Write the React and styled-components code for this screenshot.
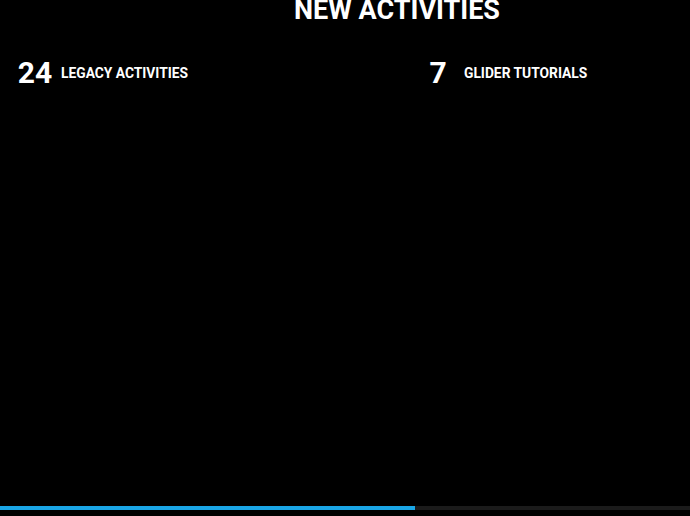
import React from "react";
import styled, { createGlobalStyle } from "styled-components";

const Global = createGlobalStyle`
  html, body { margin: 0; padding: 0; background: #000; }
  body { font-family: Roboto, "Liberation Sans", sans-serif; color: #fff; overflow: hidden; }
`;

const Page = styled.div`
  height: 516px;
  display: flex;
  flex-direction: column;
  background: #000;
`;

const Title = styled.h1`
  margin: -3px 0 0 0;
  padding-left: 104px;
  font-size: 27px;
  line-height: 27px;
  font-weight: 700;
  text-align: center;
  letter-spacing: 0;
`;

const Stats = styled.div`
  display: grid;
  grid-template-columns: 403px 1fr;
  padding: 31px 0 0 17px;
`;

const Stat = styled.div`
  display: flex;
  align-items: center;
  gap: 8px;
`;

const Num = styled.span`
  width: 36px;
  text-align: center;
  font-size: 30px;
  font-weight: 700;
  line-height: 36px;
`;

const Label = styled.span`
  font-size: 13.8px;
  font-weight: 700;
  text-transform: uppercase;
`;

const Spacer = styled.div`
  flex: 1;
`;

const Track = styled.div`
  height: 4px;
  margin-bottom: 6px;
  background: #1b1b1b;
`;

const Fill = styled.div`
  height: 100%;
  background: #1aa6e6;
`;

const stats = [
  { n: 24, label: "Legacy Activities" },
  { n: 7, label: "Glider Tutorials" },
];

export default function App() {
  return (
    <Page>
      <Global />
      <Title>NEW ACTIVITIES</Title>
      <Stats>
        {stats.map((s) => (
          <Stat key={s.label}>
            <Num>{s.n}</Num>
            <Label>{s.label}</Label>
          </Stat>
        ))}
      </Stats>
      <Spacer />
      <Track>
        <Fill style={{ width: `${(415 / 690) * 100}%` }} />
      </Track>
    </Page>
  );
}
